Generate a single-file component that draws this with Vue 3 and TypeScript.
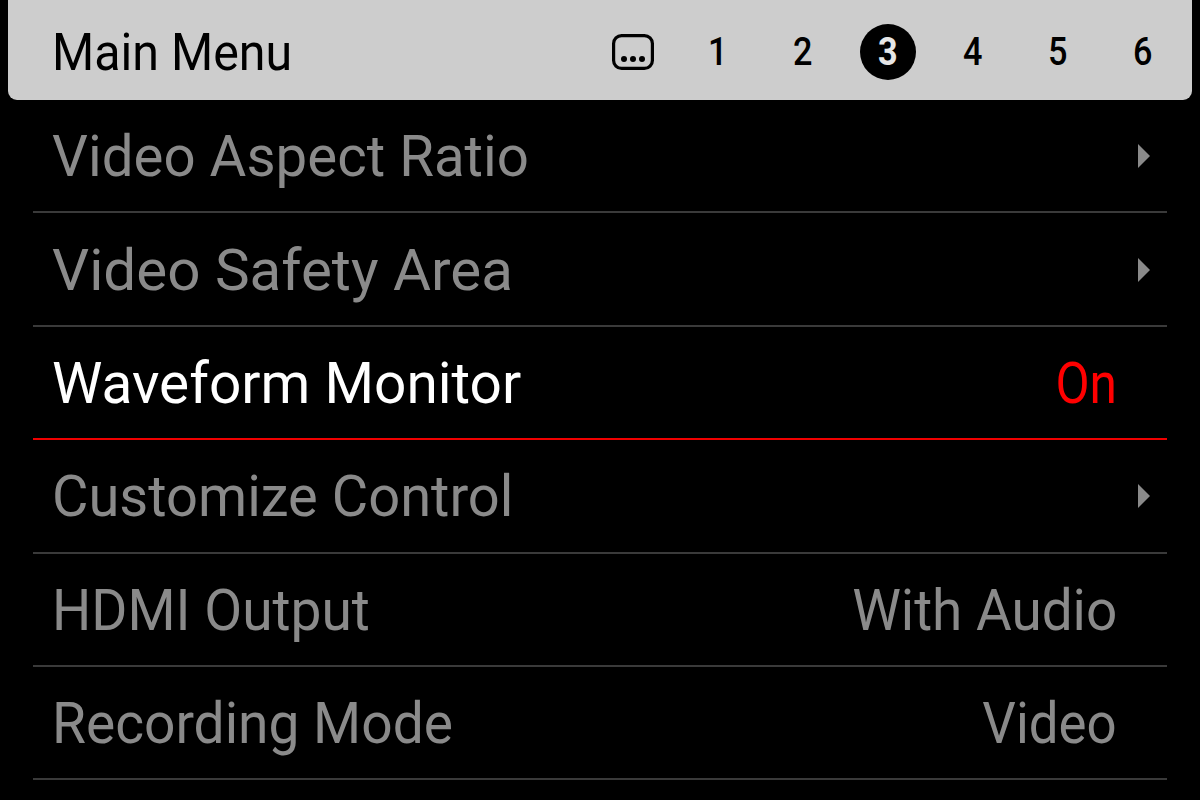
<script setup lang="ts">
interface MenuRow {
  label: string
  labelFit: number
  value?: string
  valueFit?: number
  active?: boolean
}

const tabs = [1, 2, 3, 4, 5, 6]
const currentTab = 3

const rows: MenuRow[] = [
  { label: 'Video Aspect Ratio', labelFit: 0.973 },
  { label: 'Video Safety Area', labelFit: 1.006 },
  { label: 'Waveform Monitor', labelFit: 0.979, value: 'On', valueFit: 0.855, active: true },
  { label: 'Customize Control', labelFit: 0.966 },
  { label: 'HDMI Output', labelFit: 0.95, value: 'With Audio', valueFit: 0.946 },
  { label: 'Recording Mode', labelFit: 0.95, value: 'Video', valueFit: 0.91 },
]
</script>

<template>
  <div class="screen">
    <header class="menu-header">
      <span class="menu-title">Main Menu</span>
      <nav class="tabs">
        <span class="tab">
          <svg class="fav-icon" width="42" height="36" viewBox="0 0 42 36">
            <rect x="1.6" y="1.6" width="38.8" height="32.8" rx="8" fill="none" stroke="#000" stroke-width="3.2" />
            <circle cx="12" cy="25" r="3" />
            <circle cx="21" cy="25" r="3" />
            <circle cx="30" cy="25" r="3" />
          </svg>
        </span>
        <span v-for="t in tabs" :key="t" class="tab" :class="{ current: t === currentTab }">
          <span class="digit">{{ t }}</span>
        </span>
      </nav>
    </header>

    <ul class="menu-list">
      <li v-for="row in rows" :key="row.label" class="menu-row" :class="{ active: row.active }">
        <span class="row-label" :style="{ transform: `scaleX(${row.labelFit})` }">{{ row.label }}</span>
        <span v-if="row.value" class="row-value" :style="{ transform: `scaleX(${row.valueFit})` }">{{ row.value }}</span>
        <svg v-else class="arrow" width="12" height="24" viewBox="0 0 12 24">
          <path d="M0 0 L12 12 L0 24 Z" fill="#8a8a8a" />
        </svg>
      </li>
    </ul>
  </div>
</template>

<style>
html,
body {
  background: #000;
  overflow: hidden;
}
</style>

<style scoped>
.screen {
  width: 1200px;
  height: 800px;
  background: #000;
  overflow: hidden;
  font-family: Roboto, 'Liberation Sans', sans-serif;
}

.menu-header {
  display: flex;
  align-items: center;
  justify-content: space-between;
  height: 100px;
  margin: 0 8px;
  padding: 4px 7px 0 44px;
  box-sizing: border-box;
  background: #cdcdcd;
  border-radius: 0 0 9px 9px;
  color: #000;
}

.menu-title {
  display: inline-block;
  font-size: 52px;
  font-weight: 400;
  transform: scaleX(0.93);
  transform-origin: left center;
}

.tabs {
  display: flex;
  align-items: center;
}

.tab {
  display: flex;
  align-items: center;
  justify-content: center;
  width: 85px;
  height: 56px;
  font-size: 38px;
  font-weight: 500;
}

.digit {
  display: inline-block;
  transform: scaleX(0.9);
}

.fav-icon {
  display: block;
}

.current {
  width: 56px;
  margin: 0 14.5px;
  border-radius: 50%;
  background: #000;
  color: #e6e6e6;
  font-weight: 700;
}

.menu-list {
  list-style: none;
  margin: 0 33px;
  padding: 0;
}

.menu-row {
  display: flex;
  align-items: center;
  justify-content: space-between;
  height: 113.4px;
  box-sizing: border-box;
  padding: 1px 17px 0 19px;
  border-bottom: 2px solid #3a3a3a;
  color: #8a8a8a;
  font-size: 58px;
  font-weight: 400;
}

.row-label {
  display: inline-block;
  transform-origin: left center;
}

.row-value {
  display: inline-block;
  margin-right: 33px;
  transform-origin: right center;
}

.active {
  color: #fff;
  border-bottom-color: #f00000;
}

.active .row-value {
  color: #ff0000;
}

.arrow {
  display: block;
}
</style>
